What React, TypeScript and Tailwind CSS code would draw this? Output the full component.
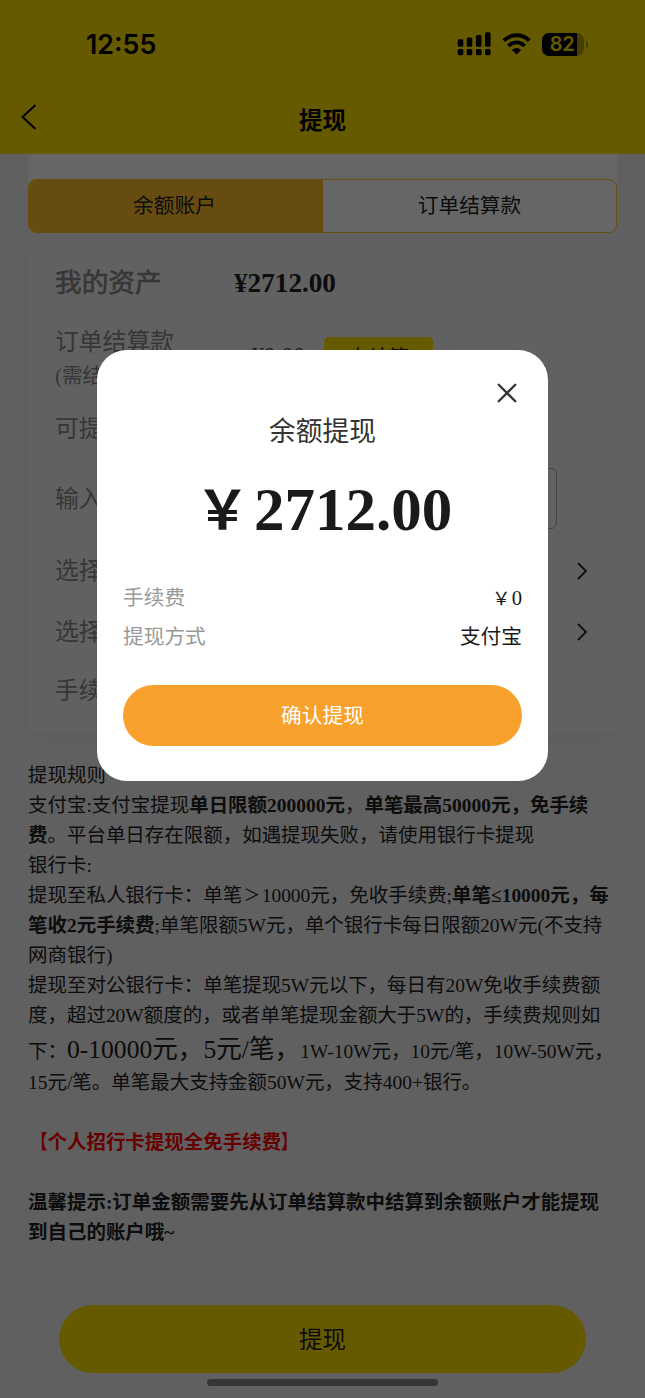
import type { ReactNode } from "react"

function StatusBar() {
  return (
    <div className="flex h-[88px] items-center justify-between pl-[86px] pr-[57px]">
      <span className="font-['Inter',sans-serif] text-[26.8px] font-semibold leading-none text-black">12:55</span>
      <div className="flex items-center">
        <svg width="34" height="24" viewBox="0 0 34 24" fill="#000">
          <rect x="0.7" y="7.3" width="5.6" height="7.4" rx="1.5" />
          <rect x="9.7" y="5.5" width="5.6" height="9.2" rx="1.5" />
          <rect x="18.9" y="3" width="5.6" height="11.7" rx="1.5" />
          <rect x="28" y="0.3" width="5.6" height="14.4" rx="1.5" />
          <rect x="0.7" y="16.9" width="5.6" height="6.3" rx="1.5" />
          <rect x="9.7" y="16.9" width="5.6" height="6.3" rx="1.5" />
          <rect x="18.9" y="16.9" width="5.6" height="6.3" rx="1.5" />
          <rect x="28" y="16.9" width="5.6" height="6.3" rx="1.5" />
        </svg>
        <svg className="ml-[11px]" width="29" height="24" viewBox="0 0 29 24" fill="none" stroke="#000">
          <path d="M1.8 8.6 A18 18 0 0 1 27.2 8.6" strokeWidth="4" />
          <path d="M6.4 13.8 A11.4 11.4 0 0 1 22.6 13.8" strokeWidth="3.8" />
          <path d="M14.5 22.6 L9.8 17.9 Q14.5 14 19.2 17.9 Z" fill="#000" stroke="none" />
        </svg>
        <div className="ml-[11px] flex h-[23px] w-[42px] items-center overflow-hidden rounded-[7px] bg-black/30">
          <div className="flex h-full w-[35px] items-center justify-center bg-black pl-[6px] font-['Inter',sans-serif] text-[20px] font-semibold leading-none tracking-[-0.3px] text-[#ffe100]">
            82
          </div>
        </div>
        <div className="ml-[2px] h-[7px] w-[2.5px] rounded-r-full bg-black/30" />
      </div>
    </div>
  )
}

function Chevron() {
  return (
    <svg width="12" height="20" viewBox="0 0 12 20" fill="none" stroke="#222" strokeWidth="1.8">
      <path d="M2 2 L10 10 L2 18" />
    </svg>
  )
}

function Row({ label, className, children }: { label: string; className: string; children?: ReactNode }) {
  return (
    <div className={`flex items-center justify-between pl-[27px] pr-[29px] ${className}`}>
      <span className="pt-[2px] text-[23.8px] text-[#888]">{label}</span>
      {children}
    </div>
  )
}

function Rules() {
  return (
    <div className="mt-[27px] whitespace-nowrap px-7 text-[19.48px] leading-[30px] text-[#222]">
      <p>提现规则</p>
      <p>
        支付宝:支付宝提现<b>单日限额200000元</b>，<b>单笔最高50000元，免手续</b>
      </p>
      <p>
        <b>费</b>。平台单日存在限额，如遇提现失败，请使用银行卡提现
      </p>
      <p>银行卡:</p>
      <p>
        提现至私人银行卡：单笔<span className="inline-block scale-[0.85]">＞</span>10000元，免收手续费;<b>单笔≤10000元，每</b>
      </p>
      <p>
        <b>笔收2元手续费</b>;单笔限额5W元，单个银行卡每日限额20W元(不支持
      </p>
      <p>网商银行)</p>
      <p>提现至对公银行卡：单笔提现5W元以下，每日有20W免收手续费额</p>
      <p>度，超过20W额度的，或者单笔提现金额大于5W的，手续费规则如</p>
      <p className="h-[37px] leading-[37px]">
        下：<span className="text-[25.6px]">0-10000元，5元/笔，</span>1W-10W元，10元/笔，10W-50W元，
      </p>
      <p>15元/笔。单笔最大支持金额50W元，支持400+银行。</p>
      <p className="mt-[30px] font-bold text-[#ff0000]">
        <span className="inline-block origin-right scale-x-[0.85]">【</span>个人招行卡提现全免手续费
        <span className="inline-block origin-left scale-x-[0.85]">】</span>
      </p>
      <p className="mt-[30px] font-bold">温馨提示:订单金额需要先从订单结算款中结算到余额账户才能提现</p>
      <p className="font-bold">到自己的账户哦~</p>
    </div>
  )
}

function WithdrawDialog() {
  return (
    <div className="absolute inset-0 flex items-start justify-center bg-black/60 pt-[350px]">
      <div className="flex h-[431px] w-[451px] flex-col rounded-[30px] bg-white px-[26px]">
        <div className="flex h-[63px] items-end justify-end pb-[10px] pr-[5px]">
          <svg width="20" height="20" viewBox="0 0 20 20" fill="none" stroke="#333" strokeWidth="2.3" strokeLinecap="round">
            <path d="M1.7 1.7 L18.3 18.3 M18.3 1.7 L1.7 18.3" />
          </svg>
        </div>
        <h2 className="h-9 pt-px text-center text-[26.8px] leading-9 text-[#333]">余额提现</h2>
        <div className="mt-[21px] flex h-[80px] items-baseline justify-center whitespace-nowrap text-[61px] font-bold leading-[80px] text-[#1a1a1a]">
          <span className="w-[61px] pr-[2px] text-center text-[54px]">￥</span>
          <span>2712.00</span>
        </div>
        <div className="mt-[29px] text-[20.7px] leading-[38.5px]">
          <div className="flex h-[38.5px] justify-between">
            <span className="text-[#999]">手续费</span>
            <span className="text-[#1a1a1a]">
              <span className="inline-block w-[20.7px] text-center text-[18.5px] leading-none">￥</span>0
            </span>
          </div>
          <div className="flex h-[38.5px] justify-between">
            <span className="text-[#999]">提现方式</span>
            <span className="text-[#1a1a1a]">支付宝</span>
          </div>
        </div>
        <button className="mt-[29px] h-[61px] rounded-full bg-[#f8a12c] pt-[2px] text-[20.7px] text-white">确认提现</button>
      </div>
    </div>
  )
}

export default function App() {
  return (
    <div className="relative h-[1398px] w-[645px] overflow-hidden bg-[#f1f1f1] font-['Liberation_Serif','Noto_Sans_CJK_SC',serif]">
      {/* Header */}
      <header className="h-[154px] bg-[#ffe100]">
        <StatusBar />
        <div className="grid h-[66px] grid-cols-3 items-center px-5">
          <svg className="-mt-2" width="18" height="28" viewBox="0 0 18 28" fill="none" stroke="#000" strokeWidth="2">
            <path d="M15.5 2 L2.5 14 L15.5 26" />
          </svg>
          <h1 className="pt-[2px] text-center text-[23.5px] font-bold text-black">提现</h1>
        </div>
      </header>

      {/* Tabs */}
      <div className="mx-7 h-[79px] rounded-b-[8px] bg-white pt-[25px]">
        <div className="flex h-[54px] overflow-hidden rounded-[8px] border-[1.5px] border-[#ffbf2b] text-[20.7px] text-[#222]">
          <div className="flex w-[294px] items-center justify-center bg-[#ffbf2b] pr-[3px] pt-[2px]">余额账户</div>
          <div className="flex flex-1 items-center justify-center pt-[2px]">订单结算款</div>
        </div>
      </div>

      {/* Account card */}
      <div className="mx-7 mt-3 h-[489px] rounded-[8px] bg-[#f3f3f3] shadow-[0_4px_18px_rgba(0,0,0,0.04)]">
        <div className="flex h-[76px] items-center pl-[27px]">
          <span className="w-[179px] text-[26.7px] text-[#888] [-webkit-text-stroke:0.6px_#888]">我的资产</span>
          <span className="text-[27.2px] font-bold text-[#222]">¥2712.00</span>
        </div>
        <div className="flex h-[78px] pl-[27px]">
          <div className="w-[197px] pt-[4px] text-[#888]">
            <div className="text-[23.8px] leading-[35px]">订单结算款</div>
            <div className="text-[20.7px] leading-[32px]">(需结算)</div>
          </div>
          <span className="w-[72px] pt-[16px] text-[23.5px] leading-[36px] text-[#444]">¥0.00</span>
          <span className="mt-[16px] h-[38px] w-[109px] rounded-[5px] bg-[#ffe100] pt-[2px] text-center text-[20.7px] leading-[38px] text-[#222]">
            去结算
          </span>
        </div>
        <Row label="可提现" className="h-[60px]" />
        <Row label="输入" className="h-[79px]">
          <div className="mr-[31px] h-[61px] w-[330px] rounded-[6px] border-[1.5px] border-[#aaa]" />
        </Row>
        <Row label="选择" className="h-[65px]">
          <Chevron />
        </Row>
        <Row label="选择" className="h-[57px]">
          <Chevron />
        </Row>
        <Row label="手续费" className="h-[62px]" />
      </div>

      <Rules />

      <div className="mx-[59px] mt-[57px] flex h-[68px] items-center justify-center rounded-full bg-[#ffe100] pt-[3px] text-[23.5px] text-[#222]">
        提现
      </div>
      <div className="mx-auto mt-[6px] h-[7px] w-[231px] rounded-full bg-[#888]" />

      <WithdrawDialog />
    </div>
  )
}
